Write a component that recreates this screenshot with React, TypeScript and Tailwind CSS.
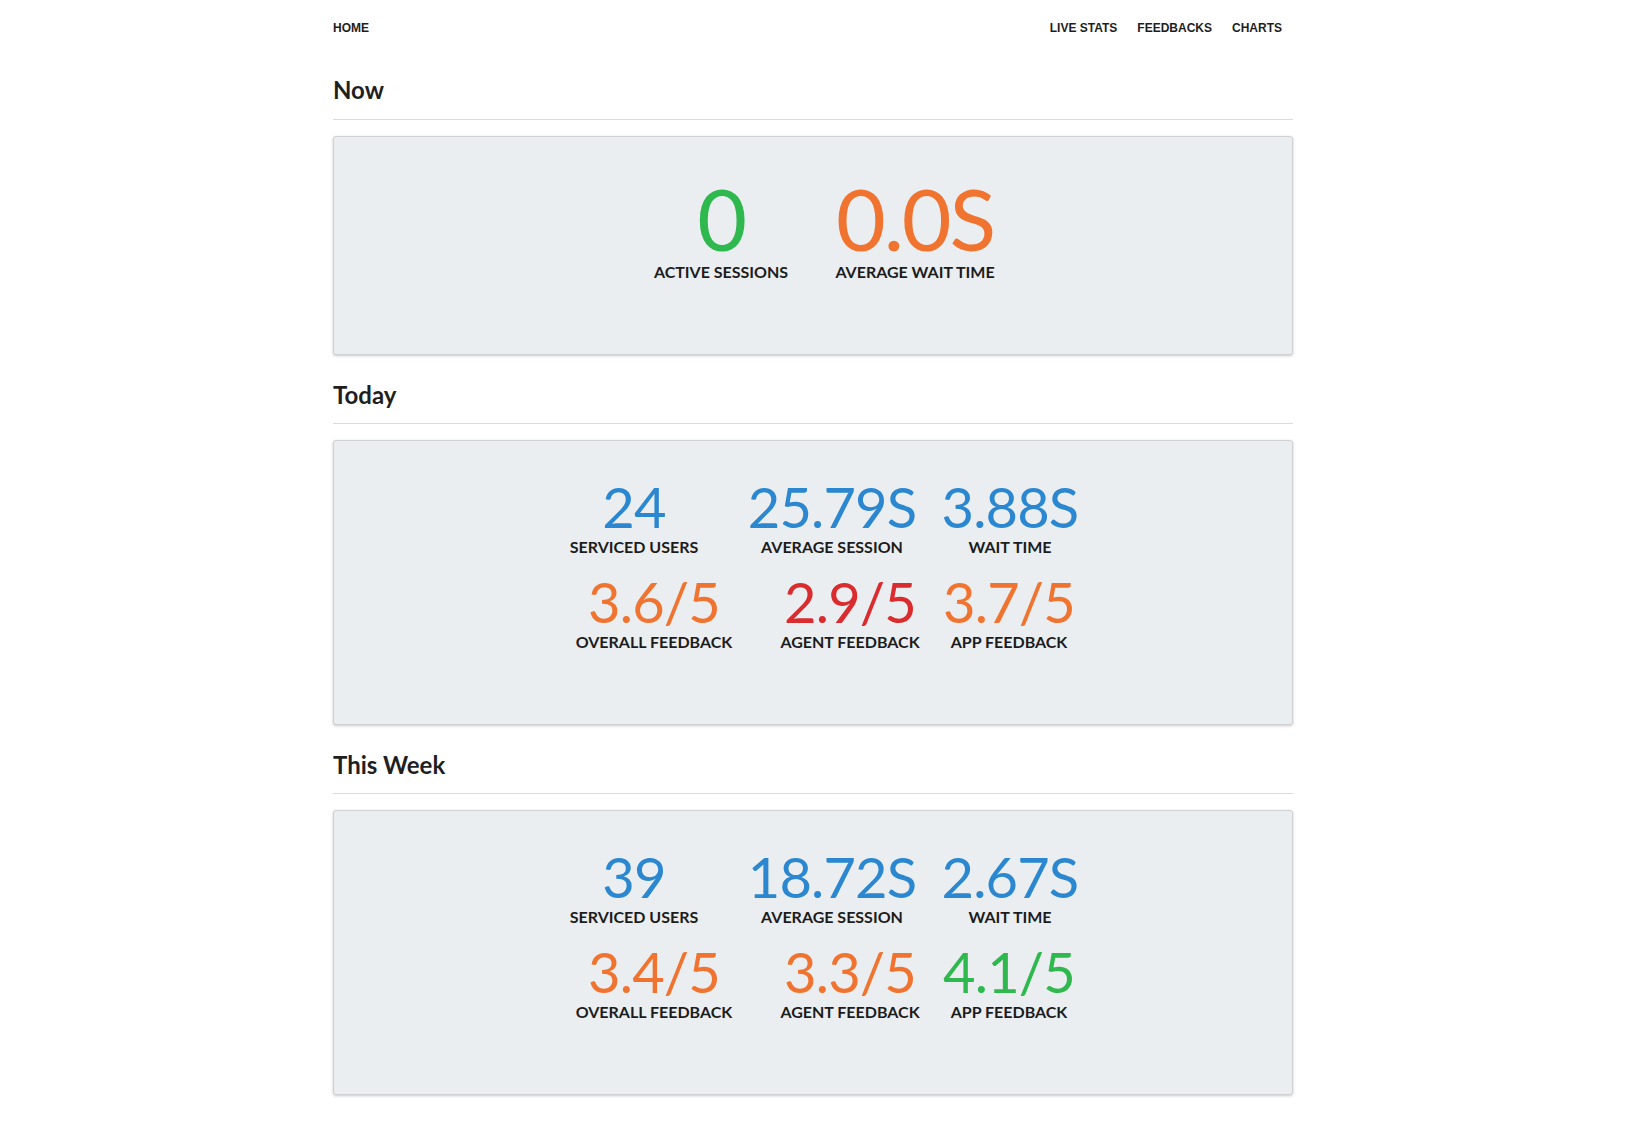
import React from "react";

type Stat = { value: string; label: string; color: string };

const GREEN = "text-[#2eb84e]";
const ORANGE = "text-[#f07430]";
const BLUE = "text-[#2b88d0]";
const RED = "text-[#da2b2e]";

function StatItem({ s, big, className }: { s: Stat; big?: boolean; className?: string }) {
  return (
    <div className={"flex flex-col items-center " + (className ?? "")}>
      <div
        className={
          (big ? "text-[86px] tracking-[-0.025em] " : "text-[56px] tracking-[-0.015em] ") +
          "leading-none font-normal whitespace-nowrap " +
          s.color
        }
      >
        {s.value}
      </div>
      <div
        className={
          (big ? "mt-[3px] " : "mt-[4px] ") +
          "text-[16px] leading-none font-bold text-[#1c1c1c] whitespace-nowrap"
        }
      >
        {s.label}
      </div>
    </div>
  );
}

function Section({ title, children, first }: { title: string; children: React.ReactNode; first?: boolean }) {
  return (
    <section>
      <h2
        className={
          (first ? "mt-[40px] " : "mt-[25px] ") +
          "text-[24px] leading-[29px] font-bold text-[#1f1f1f]"
        }
      >
        {title}
      </h2>
      <div className={(first ? "mt-[15px] " : "mt-[14px] ") + "h-px bg-[#dcdcdc]"} />
      <div className="mt-[16px] rounded-[3px] border border-[#cfd2d4] bg-[#ebeef0] shadow-[0_1px_3px_rgba(0,0,0,0.22)]">
        {children}
      </div>
    </section>
  );
}

function StatsBlock({ row1, row2 }: { row1: Stat[]; row2: Stat[] }) {
  return (
    <div className="pt-[38px] pb-[74px] flex flex-col">
      <div className="flex justify-center pl-[18px]">
        <StatItem s={row1[0]} className="w-[170px] mr-[28px]" />
        <StatItem s={row1[1]} className="w-[170px] mr-[8px]" />
        <StatItem s={row1[2]} className="w-[170px]" />
      </div>
      <div className="mt-[19px] flex justify-center pl-[37px]">
        <StatItem s={row2[0]} className="w-[158px] mr-[38px]" />
        <StatItem s={row2[1]} className="w-[158px] mr-[1px]" />
        <StatItem s={row2[2]} className="w-[158px]" />
      </div>
    </div>
  );
}

export default function App() {
  return (
    <div className="min-h-screen bg-white pr-[5px] font-['Lato','Noto_Sans',sans-serif]">
      <div className="mx-auto w-[960px] pb-[32px]">
        <nav className="pt-[21px] flex justify-between font-['Liberation_Sans',Arial,sans-serif] text-[12px] leading-[14px] font-bold text-[#1e1e1e]">
          <a href="#">HOME</a>
          <div className="flex gap-[20px] pr-[11px]">
            <a href="#">LIVE STATS</a>
            <a href="#">FEEDBACKS</a>
            <a href="#">CHARTS</a>
          </div>
        </nav>

        <Section title="Now" first>
          <div className="pt-[38px] pb-[74px] pl-[10px] flex justify-center">
            <StatItem s={{ value: "0", label: "ACTIVE SESSIONS", color: GREEN }} big className="w-[160px] mr-[34px]" />
            <StatItem s={{ value: "0.0S", label: "AVERAGE WAIT TIME", color: ORANGE }} big className="w-[160px]" />
          </div>
        </Section>

        <Section title="Today">
          <StatsBlock
            row1={[
              { value: "24", label: "SERVICED USERS", color: BLUE },
              { value: "25.79S", label: "AVERAGE SESSION", color: BLUE },
              { value: "3.88S", label: "WAIT TIME", color: BLUE },
            ]}
            row2={[
              { value: "3.6/5", label: "OVERALL FEEDBACK", color: ORANGE },
              { value: "2.9/5", label: "AGENT FEEDBACK", color: RED },
              { value: "3.7/5", label: "APP FEEDBACK", color: ORANGE },
            ]}
          />
        </Section>

        <Section title="This Week">
          <StatsBlock
            row1={[
              { value: "39", label: "SERVICED USERS", color: BLUE },
              { value: "18.72S", label: "AVERAGE SESSION", color: BLUE },
              { value: "2.67S", label: "WAIT TIME", color: BLUE },
            ]}
            row2={[
              { value: "3.4/5", label: "OVERALL FEEDBACK", color: ORANGE },
              { value: "3.3/5", label: "AGENT FEEDBACK", color: ORANGE },
              { value: "4.1/5", label: "APP FEEDBACK", color: GREEN },
            ]}
          />
        </Section>
      </div>
    </div>
  );
}
